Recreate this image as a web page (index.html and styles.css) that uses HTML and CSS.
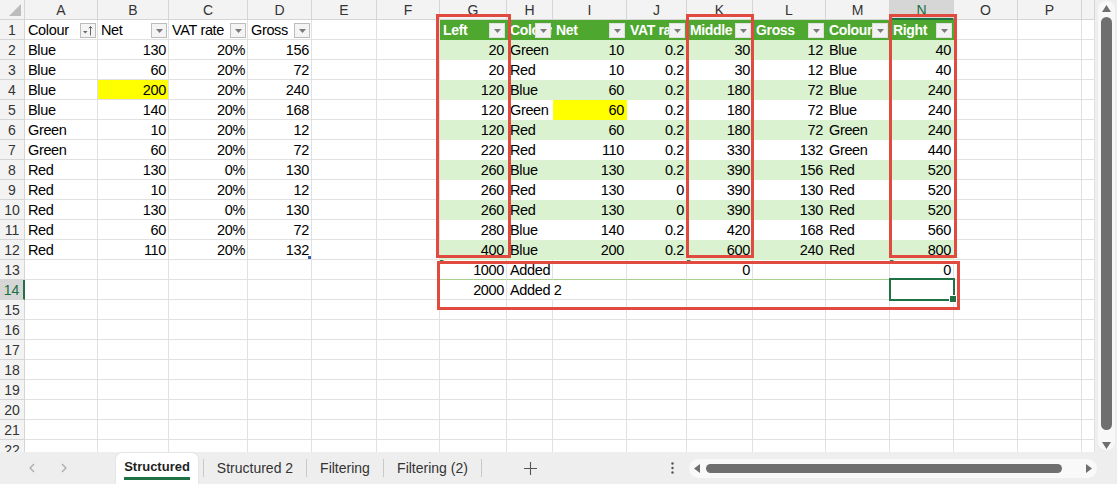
FILE: index.html
```html
<!DOCTYPE html>
<html>
<head>
<meta charset="utf-8">
<link rel="stylesheet" href="styles.css">
</head>
<body>
<div class="app">
  <div class="main">
    <div class="sheet">
      <div class="row hd">
        <span class="corner"><svg width="12" height="12" viewBox="0 0 12 12"><path d="M12 0V12H0Z" fill="#bcbcbc"/></svg></span>
        <span>A</span><span>B</span><span>C</span><span>D</span><span>E</span><span>F</span><span>G</span><span>H</span><span>I</span><span>J</span><span>K</span><span>L</span><span>M</span><span class="sel">N</span><span>O</span><span>P</span><span></span>
      </div>
      <div class="row">
        <span class="rh">1</span>
        <span class="h">Colour<em class="fb"><svg width="14" height="13" viewBox="0 0 14 13"><path d="M2 7H6.5L4.25 9.5Z" fill="#666"/><path d="M9.5 11.5V2.5M7.8 4.3L9.5 2.5L11.2 4.3" stroke="#666" stroke-width="1" fill="none"/></svg></em></span>
        <span class="h">Net<em class="fb"><svg width="7" height="4" viewBox="0 0 7 4"><path d="M0 0H7L3.5 4Z" fill="#7a7a7a"/></svg></em></span>
        <span class="h">VAT rate<em class="fb"><svg width="7" height="4" viewBox="0 0 7 4"><path d="M0 0H7L3.5 4Z" fill="#7a7a7a"/></svg></em></span>
        <span class="h">Gross<em class="fb"><svg width="7" height="4" viewBox="0 0 7 4"><path d="M0 0H7L3.5 4Z" fill="#7a7a7a"/></svg></em></span>
        <span></span><span></span>
        <span class="th">Left<em class="fb"><svg width="7" height="4" viewBox="0 0 7 4"><path d="M0 0H7L3.5 4Z" fill="#7a7a7a"/></svg></em></span>
        <span class="th">Colour<em class="fb"><svg width="7" height="4" viewBox="0 0 7 4"><path d="M0 0H7L3.5 4Z" fill="#7a7a7a"/></svg></em></span>
        <span class="th">Net<em class="fb"><svg width="7" height="4" viewBox="0 0 7 4"><path d="M0 0H7L3.5 4Z" fill="#7a7a7a"/></svg></em></span>
        <span class="th">VAT rate<em class="fb"><svg width="7" height="4" viewBox="0 0 7 4"><path d="M0 0H7L3.5 4Z" fill="#7a7a7a"/></svg></em></span>
        <span class="th">Middle<em class="fb"><svg width="7" height="4" viewBox="0 0 7 4"><path d="M0 0H7L3.5 4Z" fill="#7a7a7a"/></svg></em></span>
        <span class="th">Gross<em class="fb"><svg width="7" height="4" viewBox="0 0 7 4"><path d="M0 0H7L3.5 4Z" fill="#7a7a7a"/></svg></em></span>
        <span class="th">Colour<em class="fb"><svg width="7" height="4" viewBox="0 0 7 4"><path d="M0 0H7L3.5 4Z" fill="#7a7a7a"/></svg></em></span>
        <span class="th">Right<em class="fb"><svg width="7" height="4" viewBox="0 0 7 4"><path d="M0 0H7L3.5 4Z" fill="#7a7a7a"/></svg></em></span>
        <span></span><span></span><span></span>
      </div>
      <div class="row band">
        <span class="rh">2</span><span>Blue</span><span class="n">130</span><span class="n">20%</span><span class="n">156</span><span></span><span></span>
        <span class="t n">20</span><span class="t">Green</span><span class="t n">10</span><span class="t n">0.2</span><span class="t n">30</span><span class="t n">12</span><span class="t">Blue</span><span class="t n">40</span>
        <span></span><span></span><span></span>
      </div>
      <div class="row">
        <span class="rh">3</span><span>Blue</span><span class="n">60</span><span class="n">20%</span><span class="n">72</span><span></span><span></span>
        <span class="t n">20</span><span class="t">Red</span><span class="t n">10</span><span class="t n">0.2</span><span class="t n">30</span><span class="t n">12</span><span class="t">Blue</span><span class="t n">40</span>
        <span></span><span></span><span></span>
      </div>
      <div class="row band">
        <span class="rh">4</span><span>Blue</span><span class="n y">200</span><span class="n">20%</span><span class="n">240</span><span></span><span></span>
        <span class="t n">120</span><span class="t">Blue</span><span class="t n">60</span><span class="t n">0.2</span><span class="t n">180</span><span class="t n">72</span><span class="t">Blue</span><span class="t n">240</span>
        <span></span><span></span><span></span>
      </div>
      <div class="row">
        <span class="rh">5</span><span>Blue</span><span class="n">140</span><span class="n">20%</span><span class="n">168</span><span></span><span></span>
        <span class="t n">120</span><span class="t">Green</span><span class="t n y">60</span><span class="t n">0.2</span><span class="t n">180</span><span class="t n">72</span><span class="t">Blue</span><span class="t n">240</span>
        <span></span><span></span><span></span>
      </div>
      <div class="row band">
        <span class="rh">6</span><span>Green</span><span class="n">10</span><span class="n">20%</span><span class="n">12</span><span></span><span></span>
        <span class="t n">120</span><span class="t">Red</span><span class="t n">60</span><span class="t n">0.2</span><span class="t n">180</span><span class="t n">72</span><span class="t">Green</span><span class="t n">240</span>
        <span></span><span></span><span></span>
      </div>
      <div class="row">
        <span class="rh">7</span><span>Green</span><span class="n">60</span><span class="n">20%</span><span class="n">72</span><span></span><span></span>
        <span class="t n">220</span><span class="t">Red</span><span class="t n">110</span><span class="t n">0.2</span><span class="t n">330</span><span class="t n">132</span><span class="t">Green</span><span class="t n">440</span>
        <span></span><span></span><span></span>
      </div>
      <div class="row band">
        <span class="rh">8</span><span>Red</span><span class="n">130</span><span class="n">0%</span><span class="n">130</span><span></span><span></span>
        <span class="t n">260</span><span class="t">Blue</span><span class="t n">130</span><span class="t n">0.2</span><span class="t n">390</span><span class="t n">156</span><span class="t">Red</span><span class="t n">520</span>
        <span></span><span></span><span></span>
      </div>
      <div class="row">
        <span class="rh">9</span><span>Red</span><span class="n">10</span><span class="n">20%</span><span class="n">12</span><span></span><span></span>
        <span class="t n">260</span><span class="t">Red</span><span class="t n">130</span><span class="t n">0</span><span class="t n">390</span><span class="t n">130</span><span class="t">Red</span><span class="t n">520</span>
        <span></span><span></span><span></span>
      </div>
      <div class="row band">
        <span class="rh">10</span><span>Red</span><span class="n">130</span><span class="n">0%</span><span class="n">130</span><span></span><span></span>
        <span class="t n">260</span><span class="t">Red</span><span class="t n">130</span><span class="t n">0</span><span class="t n">390</span><span class="t n">130</span><span class="t">Red</span><span class="t n">520</span>
        <span></span><span></span><span></span>
      </div>
      <div class="row">
        <span class="rh">11</span><span>Red</span><span class="n">60</span><span class="n">20%</span><span class="n">72</span><span></span><span></span>
        <span class="t n">280</span><span class="t">Blue</span><span class="t n">140</span><span class="t n">0.2</span><span class="t n">420</span><span class="t n">168</span><span class="t">Red</span><span class="t n">560</span>
        <span></span><span></span><span></span>
      </div>
      <div class="row band">
        <span class="rh">12</span><span>Red</span><span class="n">110</span><span class="n">20%</span><span class="n rz">132</span><span></span><span></span>
        <span class="t n">400</span><span class="t">Blue</span><span class="t n">200</span><span class="t n">0.2</span><span class="t n">600</span><span class="t n">240</span><span class="t">Red</span><span class="t n">800</span>
        <span></span><span></span><span></span>
      </div>
      <div class="row">
        <span class="rh">13</span><span></span><span></span><span></span><span></span><span></span><span></span>
        <span class="n g13 tri">1000</span><span class="g13">Added</span><span class="g13"></span><span class="g13"></span><span class="n g13 tri">0</span><span class="g13"></span><span class="g13"></span><span class="n g13 tri">0</span>
        <span></span><span></span><span></span>
      </div>
      <div class="row">
        <span class="rh sel">14</span><span></span><span></span><span></span><span></span><span></span><span></span>
        <span class="n">2000</span><span class="ov">Added 2</span><span></span><span></span><span></span><span></span><span></span><span></span>
        <span></span><span></span><span></span>
      </div>
      <div class="row"><span class="rh">15</span><span></span><span></span><span></span><span></span><span></span><span></span><span></span><span></span><span></span><span></span><span></span><span></span><span></span><span></span><span></span><span></span><span></span></div>
      <div class="row"><span class="rh">16</span><span></span><span></span><span></span><span></span><span></span><span></span><span></span><span></span><span></span><span></span><span></span><span></span><span></span><span></span><span></span><span></span><span></span></div>
      <div class="row"><span class="rh">17</span><span></span><span></span><span></span><span></span><span></span><span></span><span></span><span></span><span></span><span></span><span></span><span></span><span></span><span></span><span></span><span></span><span></span></div>
      <div class="row"><span class="rh">18</span><span></span><span></span><span></span><span></span><span></span><span></span><span></span><span></span><span></span><span></span><span></span><span></span><span></span><span></span><span></span><span></span><span></span></div>
      <div class="row"><span class="rh">19</span><span></span><span></span><span></span><span></span><span></span><span></span><span></span><span></span><span></span><span></span><span></span><span></span><span></span><span></span><span></span><span></span><span></span></div>
      <div class="row"><span class="rh">20</span><span></span><span></span><span></span><span></span><span></span><span></span><span></span><span></span><span></span><span></span><span></span><span></span><span></span><span></span><span></span><span></span><span></span></div>
      <div class="row"><span class="rh">21</span><span></span><span></span><span></span><span></span><span></span><span></span><span></span><span></span><span></span><span></span><span></span><span></span><span></span><span></span><span></span><span></span><span></span></div>
      <div class="row"><span class="rh">22</span><span></span><span></span><span></span><span></span><span></span><span></span><span></span><span></span><span></span><span></span><span></span><span></span><span></span><span></span><span></span><span></span><span></span></div>

      <div class="box box-g"></div>
      <div class="box box-k"></div>
      <div class="box box-n"></div>
      <div class="box box-b"></div>
      <div class="cursel"></div>
    </div>
    <div class="vs">
      <div class="vtrack">
        <svg class="varr" width="9" height="7" viewBox="0 0 9 7"><path d="M0 7L4.5 0L9 7Z" fill="#6f6f6f"/></svg>
        <div class="vthumb"></div>
        <svg class="varr" width="9" height="7" viewBox="0 0 9 7"><path d="M0 0L4.5 7L9 0Z" fill="#6f6f6f"/></svg>
      </div>
    </div>
  </div>
  <div class="tabs">
    <div class="nav">
      <svg width="6" height="10" viewBox="0 0 6 10"><path d="M5 1L1 5L5 9" stroke="#a8a8a8" stroke-width="1.2" fill="none"/></svg>
      <svg width="6" height="10" viewBox="0 0 6 10"><path d="M1 1L5 5L1 9" stroke="#a8a8a8" stroke-width="1.2" fill="none"/></svg>
    </div>
    <div class="tab act"><span>Structured</span></div>
    <i class="sep first"></i>
    <div class="tab t2">Structured 2</div>
    <i class="sep"></i>
    <div class="tab t3">Filtering</div>
    <i class="sep"></i>
    <div class="tab t4">Filtering (2)</div>
    <i class="sep"></i>
    <div class="plus"><svg width="13" height="13" viewBox="0 0 13 13"><path d="M6.5 0V13M0 6.5H13" stroke="#555" stroke-width="1.1"/></svg></div>
    <div class="dots"><svg width="3" height="12" viewBox="0 0 3 12"><circle cx="1.5" cy="1.5" r="1.2" fill="#555"/><circle cx="1.5" cy="6" r="1.2" fill="#555"/><circle cx="1.5" cy="10.5" r="1.2" fill="#555"/></svg></div>
    <div class="hs">
      <svg width="6" height="9" viewBox="0 0 6 9"><path d="M6 0V9L0 4.5Z" fill="#6f6f6f"/></svg>
      <div class="hthumb"></div>
      <svg class="rarr" width="6" height="9" viewBox="0 0 6 9"><path d="M0 0V9L6 4.5Z" fill="#6f6f6f"/></svg>
    </div>
  </div>
</div>
</body>
</html>
```

FILE: styles.css
```css
* { box-sizing: border-box; margin: 0; padding: 0; }
html, body { margin: 0; width: 1117px; height: 484px; overflow: hidden; background: #fff; }
body { font-family: "Liberation Sans Narrow", "Liberation Sans", Arial, sans-serif; }

.app { display: flex; flex-direction: column; width: 1117px; height: 484px; }
.main { display: flex; height: 452px; }
.sheet { position: relative; width: 1095px; height: 452px; overflow: hidden; }

.row {
  display: grid;
  grid-template-columns: 25px 73px 71px 79px 64px 65px 63px 67px 46px 74px 60px 66px 73px 64px 64px 64px 64px 13px;
  height: 20px;
}
.row > span {
  position: relative;
  display: block;
  height: 20px;
  border-right: 1px solid #e1e1e1;
  border-bottom: 1px solid #e1e1e1;
  font-size: 14.5px;
  letter-spacing: -0.35px;
  line-height: 19px;
  padding: 1px 2px 0 3px;
  white-space: nowrap;
  overflow: hidden;
  color: #000;
}
.row > .n { text-align: right; }
.row > .ov { overflow: visible; border-right-color: transparent; z-index: 1; }

/* column headers */
.hd > span {
  background: #f3f3f3;
  border-color: #d5d5d5;
  text-align: center;
  font-family: "Liberation Sans", Arial, sans-serif;
  font-size: 14px;
  letter-spacing: 0;
  color: #333;
  padding: 0;
  line-height: 20px;
}
.hd > .corner { display: flex; align-items: flex-end; justify-content: flex-end; padding: 0 3px 3px 0; }
.hd > .sel { background: #d6d6d6; color: #17703e; border-bottom: 2px solid #1f7244; }

/* row headers */
.row > .rh {
  background: #f3f3f3;
  border-color: #d5d5d5;
  text-align: center;
  font-family: "Liberation Sans", Arial, sans-serif;
  font-size: 14px;
  letter-spacing: 0;
  color: #333;
  padding: 0;
  line-height: 20px;
}
.row > .rh.sel { background: #d6d6d6; color: #17703e; border-right: 2px solid #1f7244; }

/* filter buttons */
.fb {
  position: absolute;
  right: 1px;
  top: 3px;
  width: 16px;
  height: 15px;
  background: #f4f4f4;
  border: 1px solid #bcbcbc;
  display: flex;
  align-items: center;
  justify-content: center;
}
.fb svg { display: block; }

/* right table */
.row > .th {
  background: #4ea72e;
  border-color: transparent;
  color: #fff;
  font-weight: bold;
  font-size: 14px;
}
.th .fb { background: #f2f2f2; border-color: #e0e0e0; }
.row > .t { border-color: transparent; background: #fff; }
.band > .t { background: #daf2d0; }
.row > .y { background: #ffff00; }
.row > .g13 { border-bottom-color: #a9d08e; }

.tri::before {
  content: "";
  position: absolute;
  left: 0;
  top: 0;
  border-top: 4px solid #2e7d45;
  border-right: 4px solid transparent;
}
.rz::after {
  content: "";
  position: absolute;
  right: 0;
  bottom: 0;
  width: 3px;
  height: 3px;
  background: #3b5aa8;
}

/* red annotation boxes */
.box { position: absolute; border: 3px solid #e04a3f; z-index: 2; }
.box-g { left: 436px; top: 14px; width: 75px; height: 244px; }
.box-k { left: 686px; top: 14px; width: 68px; height: 244px; }
.box-n { left: 889px; top: 14px; width: 68px; height: 244px; }
.box-b { left: 437px; top: 261px; width: 523px; height: 49px; }

.cursel {
  position: absolute;
  z-index: 2;
  left: 889px;
  top: 278px;
  width: 66px;
  height: 23px;
  border: 2px solid #1f7244;
}
.cursel::after {
  content: "";
  position: absolute;
  right: -4px;
  bottom: -4px;
  width: 6px;
  height: 6px;
  background: #1f7244;
  border: 1px solid #fff;
}

/* vertical scrollbar */
.vs { width: 22px; height: 452px; background: #eeeeee; padding: 1px 2px 2px 3px; }
.vtrack {
  height: 100%;
  background: #f8f8f8;
  border-radius: 8px;
  display: flex;
  flex-direction: column;
  align-items: center;
  padding-top: 4px;
}
.varr { display: block; }
.vthumb { width: 11px; height: 413px; margin: 5px 0 12px; background: #6f6f6f; border-radius: 6px; }

/* tab bar */
.tabs {
  height: 32px;
  background: #eeeeee;
  display: flex;
  align-items: center;
  font-family: "Liberation Sans", Arial, sans-serif;
  font-size: 14px;
  color: #333;
}
.nav { width: 116px; height: 32px; display: flex; align-items: center; padding-left: 29px; gap: 26px; }
.tab { height: 32px; display: flex; align-items: center; justify-content: center; white-space: nowrap; }
.tab.act {
  width: 82px;
  height: 31px;
  align-self: flex-end;
  background: #fff;
  border-radius: 6px 6px 0 0;
  box-shadow: 0 0 2px rgba(0,0,0,0.12);
  font-weight: bold;
  font-size: 13px;
  color: #1f1f1f;
  padding-top: 2px;
}
.tab.act span { border-bottom: 3px solid #1f7244; padding-bottom: 2px; line-height: 16px; }
.sep { display: block; width: 1px; height: 18px; background: #c9c9c9; }
.sep.first { margin-left: 5px; }
.t2 { width: 102px; }
.t3 { width: 76px; }
.t4 { width: 97px; }
.plus { width: 96px; display: flex; justify-content: center; align-items: center; }
.plus svg { display: block; }
.dots { width: 111px; display: flex; justify-content: flex-end; padding-right: 15px; }
.dots svg { display: block; }
.hs {
  width: 408px;
  height: 19px;
  background: #f9f9f9;
  border-radius: 10px;
  display: flex;
  align-items: center;
  padding-left: 5px;
}
.hs svg { display: block; }
.hthumb { width: 356px; height: 9px; margin-left: 6px; background: #6f6f6f; border-radius: 5px; }
.rarr { margin-left: 24px; }
```
